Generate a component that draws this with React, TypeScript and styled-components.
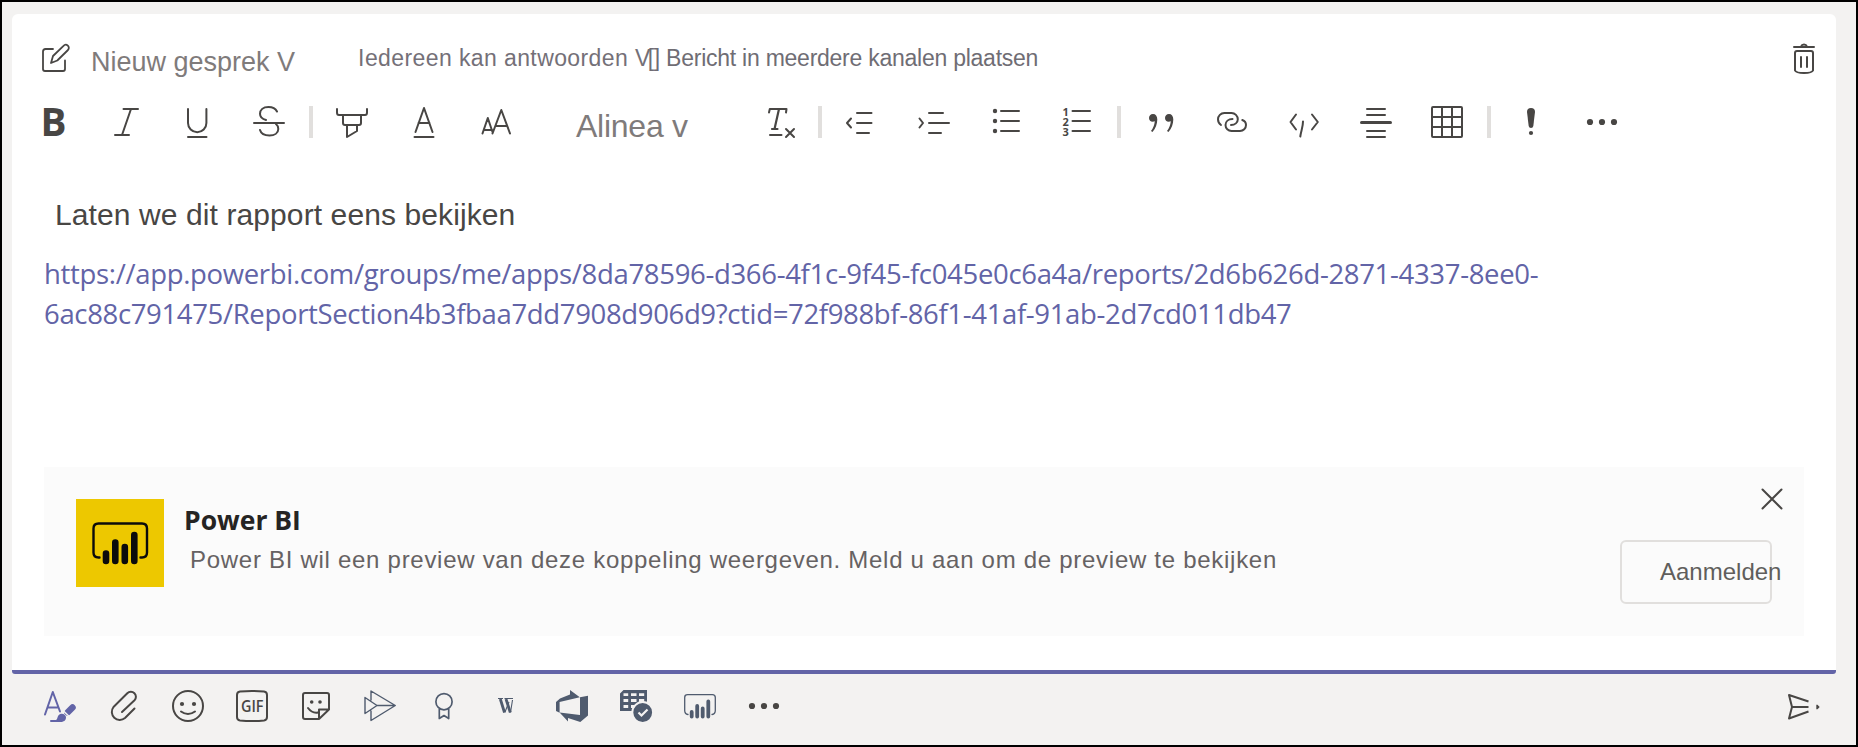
import React from "react";
import styled, { createGlobalStyle } from "styled-components";

const INK = "#484644";
const SLATE = "#4f5b6e";
const ACCENT = "#6264a7";
const SANS = '"Liberation Sans", Arial, sans-serif';
const HUMAN = '"Open Sans", "Segoe UI", sans-serif';

const GlobalStyle = createGlobalStyle`
  * { box-sizing: border-box; }
  body { margin: 0; }
`;

const Frame = styled.div`
  width: 1858px;
  height: 747px;
  border: 2px solid #000;
  background: #f3f2f1;
  padding: 12px 20px 0 10px;
  display: flex;
  flex-direction: column;
  font-family: ${SANS};
  overflow: hidden;
`;

const Composer = styled.main`
  height: 660px;
  flex: none;
  background: #fff;
  border-bottom: 4px solid ${ACCENT};
  border-radius: 6px 6px 3px 3px;
  padding: 28px 32px 34px;
  display: flex;
  flex-direction: column;
`;

const Header = styled.header`
  height: 64px;
  flex: none;
  display: flex;
  align-items: flex-start;
`;

const HeaderText = styled.span<{ $left: number; $top?: number; $size: number; $track: number; $color: string }>`
  margin-left: ${(p) => p.$left}px;
  margin-top: ${(p) => p.$top ?? 0}px;
  font-size: ${(p) => p.$size}px;
  line-height: 32px;
  letter-spacing: ${(p) => p.$track}px;
  color: ${(p) => p.$color};
  white-space: nowrap;
`;

const IconButton = styled.button<{ $color?: string }>`
  flex: none;
  width: 32px;
  height: 32px;
  padding: 0;
  border: 0;
  background: none;
  color: ${(p) => p.$color ?? INK};
  font-family: ${HUMAN};
`;

const TrashButton = styled(IconButton)`
  margin-left: auto;
  margin-right: -20px;
`;

const Glyph = styled.svg`
  display: block;
  width: 32px;
  height: 32px;
  overflow: visible;
  fill: none;
  stroke: currentColor;
  stroke-width: 2;
  stroke-linecap: round;
  stroke-linejoin: round;
  .solid { fill: currentColor; stroke: none; }
  .thin { stroke-width: 1.4; }
`;

const Toolbar = styled.div`
  height: 32px;
  flex: none;
  display: flex;
  margin-left: -6px;
`;

const ToolGroup = styled.div`
  display: flex;
  gap: 40px;
`;

const Divider = styled.i<{ $before: number; $after: number }>`
  flex: none;
  width: 4px;
  height: 32px;
  margin: 0 ${(p) => p.$after}px 0 ${(p) => p.$before}px;
  background: #e1dfdd;
`;

const ParagraphPicker = styled.div`
  width: 192px;
  margin: 4px 0 0 64px;
  font-size: 32px;
  line-height: 32px;
  letter-spacing: -0.25px;
  color: #7f7b7b;
  white-space: nowrap;
`;

const Message = styled.p`
  margin: 57px 0 0 11px;
  font-size: 30px;
  line-height: 40px;
  letter-spacing: 0.1px;
  color: #484644;
`;

const Link = styled.a`
  margin-top: 19px;
  font-family: ${HUMAN};
  font-size: 27.5px;
  line-height: 40px;
  color: ${ACCENT};
`;

const LinkLine = styled.span<{ $track: number }>`
  display: block;
  white-space: nowrap;
  letter-spacing: ${(p) => p.$track}px;
`;

const Card = styled.section`
  height: 169px;
  flex: none;
  margin-top: auto;
  background: #fbfbfb;
  padding: 32px 22px 0 32px;
  display: flex;
`;

const Logo = styled.div`
  width: 88px;
  height: 88px;
  flex: none;
  background: #edc800;
  color: #0b0b0b;
`;

const CardText = styled.div`
  margin-left: 20px;
`;

const CardTitle = styled.h2`
  margin: 5px 0 0;
  font: 700 26.5px/32px ${HUMAN};
  letter-spacing: 0;
  color: #252423;
`;

const CardNote = styled.p`
  margin: 8px 0 0 6px;
  font-size: 24px;
  line-height: 32px;
  letter-spacing: 0.715px;
  color: #666263;
  white-space: nowrap;
`;

const CardActions = styled.div`
  margin-left: auto;
  display: flex;
  flex-direction: column;
  align-items: flex-end;
`;

const CloseButton = styled(IconButton)`
  margin: -16px -6px 0 0;
`;

const SignIn = styled.button`
  width: 152px;
  height: 64px;
  margin: 25px 10px 0 0;
  padding: 0 0 0 38px;
  border: 2px solid #e1dfdd;
  border-radius: 6px;
  background: transparent;
  font: 24px/32px ${SANS};
  color: #605e5c;
  text-align: left;
  white-space: nowrap;
`;

const Footer = styled.footer`
  flex: 1;
  display: flex;
  gap: 32px;
  padding: 16px 16px 0 32px;
`;

const SendButton = styled(IconButton)`
  margin-left: auto;
`;

type IconProps = { label: string; color?: string; children: React.ReactNode; as?: React.ElementType };

const Tool = ({ label, color, children, as: Button = IconButton }: IconProps) => (
  <Button aria-label={label} $color={color}>
    <Glyph viewBox="0 0 32 32">{children}</Glyph>
  </Button>
);

const Dots = ({ start }: { start: number }) => (
  <g className="solid">
    {[0, 12, 24].map((d) => (
      <circle key={d} cx={start + d} cy={16} r={3.1} />
    ))}
  </g>
);

export default function App() {
  return (
    <>
      <GlobalStyle />
      <Frame>
        <Composer>
          <Header>
            <Tool label="compose">
              <path d="M9 7H1.500Q-1 7-1 9.500V27Q-1 29 1 29H19Q21 29 21 27V18.500" strokeWidth={1.8} />
              <path d="M7 21L9 14L19.500 3.800A2.900 2.900 0 0 1 24 8L13.300 18.500Z" strokeWidth={1.8} />
            </Tool>
            <HeaderText $left={15} $top={4} $size={27} $track={0} $color="#7f7b7b">Nieuw gesprek V</HeaderText>
            <HeaderText $left={63} $size={23} $track={0.4} $color="#747078">Iedereen kan antwoorden V</HeaderText>
            <HeaderText $left={-3} $size={23} $track={-0.25} $color="#6f6d74">[] Bericht in meerdere kanalen plaatsen</HeaderText>
            <Tool label="delete" as={TrashButton}>
              <path d="M2 5H22M9 4.500A3.200 3.200 0 0 1 15 4.500M3 11Q3 9 5 9H19Q21 9 21 11V28.500Q20 31 12 31Q4 31 3 28.500ZM9 15V25M15 15V25" />
            </Tool>
          </Header>

          <Toolbar>
            <ToolGroup>
              <Tool label="bold">
                <text className="solid" x="2.500" y="30" fontSize="39" fontWeight="700" textLength="26" lengthAdjust="spacingAndGlyphs">B</text>
              </Tool>
              <Tool label="italic"><path d="M13.500 3H28M5 29H19M21 3L12 29" /></Tool>
              <Tool label="underline"><path d="M6 3V17A9.200 9.200 0 0 0 24.400 17V3M6 31H24.500" /></Tool>
              <Tool label="strikethrough">
                <path d="M0 17H30M23 5.500C21.500 2.500 18.500 1 14.500 1C9 1 6 4 6 7.800C6 11 8 13 12 14M22 18C23.500 19.200 24.300 21 24.300 23C24.300 27 20.500 29.500 15.500 29.500C10.500 29.500 7 27.500 6 24" />
              </Tool>
            </ToolGroup>
            <Divider $before={23} $after={23} />
            <ToolGroup>
              <Tool label="highlight">
                <path d="M1 3V6.500Q1 9 3 9H29Q31 9 31 6.500V3M7 9V17Q7 19 9 19H23Q25 19 25 17V9M11 19V31L21 25V19" />
              </Tool>
              <Tool label="font colour"><path d="M7.500 26L16 2L24.500 26M10.500 17H21.500M6.500 31H25.500" /></Tool>
              <Tool label="font size"><path d="M2.500 27.500L7.800 12L12.500 26M4.500 24H12M12.500 27.500L21.300 4L30 27.500M15.500 20H27" /></Tool>
            </ToolGroup>
            <ParagraphPicker>Alinea v</ParagraphPicker>
            <ToolGroup>
              <Tool label="clear formatting">
                <path d="M1 6.500L1.800 3H18.500L18 6.500M2 29H13.500M18 23L26 31M26 23L18 31" />
                <path d="M11 3L6.500 23M4 23H9.500" strokeWidth={2.2} />
              </Tool>
            </ToolGroup>
            <Divider $before={18} $after={24} />
            <ToolGroup>
              <Tool label="outdent"><path d="M5 12.500L1 17L5 21.500M11 7H25.500M11 17H25.500M11 27H23" /></Tool>
              <Tool label="indent"><path d="M1.500 12.500L5 17L1.500 21.500M11 7H25M11 17H31M11 27H23" /></Tool>
              <Tool label="bulleted list">
                <path d="M11 5H29M11 15H29M11 25H29" />
                <g className="solid"><circle cx="5" cy="5" r="2.200" /><circle cx="5" cy="15" r="2.200" /><circle cx="5" cy="25" r="2.200" /></g>
              </Tool>
              <Tool label="numbered list">
                <path d="M10.500 5H28M10.500 15H28M10.500 25H28" />
                <g className="solid" fontSize="11" fontWeight="700"><text x="0.500" y="10">1</text><text x="0.500" y="20">2</text><text x="0.500" y="30">3</text></g>
              </Tool>
            </ToolGroup>
            <Divider $before={23} $after={24} />
            <ToolGroup>
              <Tool label="quote">
                <path className="solid" d="M8 8C5.500 8 4 9.800 4 12C4 14.200 5.500 15.800 7.800 15.800C8.500 15.800 9.200 15.600 9.800 15.300C9.500 19 8 22.500 6 25L7.500 26C10.500 22.500 12.300 18 12.300 13.500C12.300 10 10.600 8 8 8Z" />
                <path className="solid" transform="translate(16)" d="M8 8C5.500 8 4 9.800 4 12C4 14.200 5.500 15.800 7.800 15.800C8.500 15.800 9.200 15.600 9.800 15.300C9.500 19 8 22.500 6 25L7.500 26C10.500 22.500 12.300 18 12.300 13.500C12.300 10 10.600 8 8 8Z" />
              </Tool>
              <Tool label="insert link">
                <path d="M4 19C2.200 17.800 1 15.700 1 13.300A6.300 6.300 0 0 1 7.300 7H14.500A6.300 6.300 0 0 1 20.800 13.300C20.800 16.500 18 19 14 19M25.300 14C27.500 14.800 29 16.700 29 19A6 6 0 0 1 23 25H14.500A6 6 0 0 1 8.500 19C8.500 15.500 11.500 13 15.500 13" />
              </Tool>
              <Tool label="code"><path d="M7 8.500L1.500 16L7 23.500M23 8.500L28.800 16L23 23.500M14 15.500C14 21 12 25 11.300 30.500" /></Tool>
              <Tool label="insert line">
                <path d="M6 3H24M6 9H24M6 25H24M6 31H24" />
                <path d="M0.500 16.500H29.500" strokeWidth={3} />
              </Tool>
              <Tool label="table">
                <rect x="-1" y="1" width="30" height="30" rx="1" />
                <path d="M9 1V31M19 1V31M-1 11H29M-1 21H29" />
              </Tool>
            </ToolGroup>
            <Divider $before={22} $after={24} />
            <ToolGroup>
              <Tool label="important">
                <path className="solid" d="M12 6Q12 2 16 2Q20 2 20 6L18.300 20Q18 22 16 22Q14 22 13.700 20Z" />
                <circle className="solid" cx="16" cy="27" r="2.100" />
              </Tool>
              <Tool label="more options"><Dots start={3} /></Tool>
            </ToolGroup>
          </Toolbar>

          <Message>Laten we dit rapport eens bekijken</Message>
          <Link>
            <LinkLine $track={-0.325}>https://app.powerbi.com/groups/me/apps/8da78596-d366-4f1c-9f45-fc045e0c6a4a/reports/2d6b626d-2871-4337-8ee0-</LinkLine>
            <LinkLine $track={-0.345}>6ac88c791475/ReportSection4b3fbaa7dd7908d906d9?ctid=72f988bf-86f1-41af-91ab-2d7cd011db47</LinkLine>
          </Link>

          <Card>
            <Logo>
              <svg width="88" height="88" viewBox="0 0 88 88" fill="none" stroke="currentColor" strokeLinecap="round">
                <path d="M23.500 58.500H22.500Q17.500 58.500 17.500 53.500V29.500Q17.500 24.500 22.500 24.500H66Q71 24.500 71 29.500V53.500Q71 58.500 66 58.500H64.500" strokeWidth="2.400" />
                <path d="M30 54.500V62M39.300 43.500V62M48.800 48V62M58.300 36V62" strokeWidth="6.600" />
              </svg>
            </Logo>
            <CardText>
              <CardTitle>Power BI</CardTitle>
              <CardNote>Power BI wil een preview van deze koppeling weergeven. Meld u aan om de preview te bekijken</CardNote>
            </CardText>
            <CardActions>
              <Tool label="close" as={CloseButton}><path d="M6.500 6.500L25.500 25.500M25.500 6.500L6.500 25.500" /></Tool>
              <SignIn>Aanmelden</SignIn>
            </CardActions>
          </Card>
        </Composer>

        <Footer>
          <Tool label="format" color={ACCENT}>
            <path d="M1 24.500L8.800 2L16 21.500M4 17.500H13.500M7 31H17" />
            <path className="solid" d="M12 30C14 29 13 24.500 17 23.800C20 23.500 22 25.500 22 27.500C22 30.500 19.500 32 16.500 32Z" />
            <path d="M23.500 22.500L28.500 17.500" strokeWidth="6.500" />
            <path d="M19.800 21.300L24.500 25.800" strokeWidth="1.500" stroke="#f3f2f1" />
          </Tool>
          <Tool label="attach"><path d="M26.500 18.500L17 28A8 8 0 0 1 5.500 17L19.300 3.300A5 5 0 0 1 26.500 10.300L14 22" /></Tool>
          <Tool label="emoji">
            <circle cx="16" cy="16" r="15" />
            <circle className="solid" cx="10" cy="14" r="2.100" /><circle className="solid" cx="22" cy="14" r="2.100" />
            <path d="M9 21.500Q16 26.500 23 21.500" />
          </Tool>
          <Tool label="gif">
            <path d="M1 5Q1 2 4 1.600Q16 0.400 28 1.600Q31 2 31 5V27Q31 30 28 30.400Q16 31.600 4 30.400Q1 30 1 27Z" />
            <text className="solid" x="5" y="22" fontSize="16.500" fontWeight="600" textLength="22.500" lengthAdjust="spacingAndGlyphs">GIF</text>
          </Tool>
          <Tool label="sticker">
            <path d="M19 29H5Q3 29 3 27V5Q3 3 5 3H27Q29 3 29 5V19.500L19 29V19.500H29" />
            <circle className="solid" cx="11.700" cy="12" r="1.800" /><circle className="solid" cx="20" cy="12" r="1.800" />
            <path d="M8 18Q12 23.500 18 22.500" />
          </Tool>
          <Tool label="stream" color={SLATE}><path className="thin" d="M7 10V1L31.300 15.500L7 30.500V21M1 7.500V23.500L13 15.500ZM13 15.500H31" /></Tool>
          <Tool label="praise" color={SLATE}>
            <circle cx="16" cy="11.700" r="8.100" strokeWidth="1.700" />
            <path d="M11.300 19V28.500L16 25.500L20.700 28.500V19" strokeWidth="1.700" />
          </Tool>
          <Tool label="wiki" color={SLATE}>
            <path d="M8.300 9L12.500 22.500M14 9L18.300 22.500" strokeWidth="2.800" strokeLinecap="butt" />
            <path d="M12.800 22.500L17 12M18.500 22.500L20.500 10M6 8.500H11M12.500 8.500H21" strokeWidth="1.100" strokeLinecap="butt" />
          </Tool>
          <Tool label="devops" color={SLATE}>
            <path className="solid" d="M0 12L4 8.500L14 4.500V0L23.800 7.200L3.600 12V22.700L0 21ZM24 7.200L32 5.800V25.500L24.300 32L12 28V31.500L3.600 22.500L24 25Z" />
          </Tool>
          <Tool label="approvals" color={SLATE}>
            <path className="solid" fillRule="evenodd" d="M3.500 0H27V21H0V3.500ZM3.500 3.300V6H8.200V3.300ZM11 3.300V6H16.500V3.300ZM19 3.300V6H24.200V3.300ZM3.500 9V12H8.200V9ZM11 9V12H16.500V9ZM19 9V12H24.200V9ZM3.500 15V18H8.200V15ZM11 15V18H16.500V15Z" />
            <circle cx="22.700" cy="22.500" r="10.400" fill={SLATE} stroke="#f3f2f1" strokeWidth="2" />
            <path d="M18.500 22.500L21.500 25.500L27.500 19.500" stroke="#f3f2f1" strokeWidth="2.200" strokeLinecap="butt" strokeLinejoin="miter" />
          </Tool>
          <Tool label="power bi" color={SLATE}>
            <path d="M4 24.500Q0.700 24 0.700 20.500V7.500Q0.700 4.600 3.600 4.600H28.400Q31.300 4.600 31.300 7.500V20.500Q31.300 24 28 24.500" strokeWidth="1.300" />
            <path d="M7.700 22V26.500M13.200 16V26.500M18.700 18.500V26.500M24.300 11.500V26.500" strokeWidth="3.800" />
          </Tool>
          <Tool label="more apps"><Dots start={4} /></Tool>
          <Tool label="send" as={SendButton}>
            <path d="M20.500 11.500L1 5L4 17L1 28.500L20.500 21.500M4 17H20.500" strokeLinecap="butt" />
            <path className="solid" d="M28.300 14.800H29.500L31.700 17L29.500 19.200H28.300Z" />
          </Tool>
        </Footer>
      </Frame>
    </>
  );
}
